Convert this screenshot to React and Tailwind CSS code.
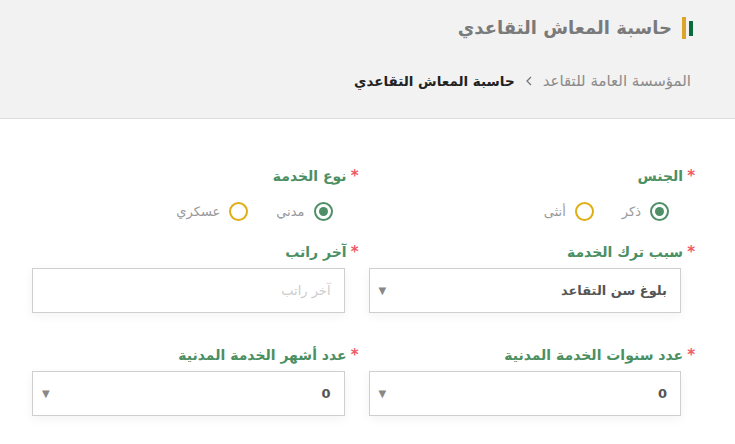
import React from 'react';

const font = { fontFamily: '"DejaVu Sans", "Noto Sans", sans-serif' };

const Label = ({ children }) => (
    <div className="flex items-center gap-1 h-5 text-[14px] font-bold text-[#4b8f62]">
        <span className="text-[#ef5a63] text-[15px]">*</span>
        <span>{children}</span>
    </div>
);

const Radio = ({ checked, label }) => (
    <div className="flex items-center gap-[9px]">
        {checked ? (
            <span className="w-[19px] h-[19px] rounded-full border-2 border-[#4f8f66] flex items-center justify-center">
                <span className="w-[9px] h-[9px] rounded-full bg-[#4f8f66]"></span>
            </span>
        ) : (
            <span className="w-[19px] h-[19px] rounded-full border-2 border-[#dfae16]"></span>
        )}
        <span className="text-[13px] text-[#9a9a9a]">{label}</span>
    </div>
);

const Select = ({ value }) => (
    <div className="mr-[14px] h-[45px] border border-[#cfcfcf] bg-white shadow-[0_3px_10px_rgba(0,0,0,0.05)] flex items-center justify-between pr-[13px] pl-[9px]">
        <span className="text-[13px] font-bold text-[#555]">{value}</span>
        <span className="text-[10px] text-[#888]">▼</span>
    </div>
);

const Input = ({ placeholder }) => (
    <div className="mr-[14px] h-[45px] border border-[#cfcfcf] bg-white shadow-[0_3px_10px_rgba(0,0,0,0.05)] flex items-center px-[13px]">
        <span className="text-[13px] text-[#cccccc]">{placeholder}</span>
    </div>
);

export default function App() {
    return (
        <div dir="rtl" className="w-[735px] h-[444px] bg-white overflow-hidden" style={font}>
            {/* Header */}
            <header className="h-[119px] bg-[#f2f2f2] border-b border-[#dcdcdc] pr-[42px] pt-[17px]">
                <div className="flex items-center gap-[10px]">
                    <div className="flex items-center gap-[3px] h-[22px]">
                        <span className="w-[4px] h-[15px] bg-[#0c6b3a]"></span>
                        <span className="w-[4px] h-[22px] bg-[#dca52a]"></span>
                    </div>
                    <h1 className="text-[18px] font-bold text-[#7a7a7a] leading-none">حاسبة المعاش التقاعدي</h1>
                </div>
                <div className="flex items-center gap-2 mt-[31px] pr-[2px]">
                    <span className="text-[15px] text-[#8a8a8a]">المؤسسة العامة للتقاعد</span>
                    <svg width="8" height="10" viewBox="0 0 8 10" className="mx-[2px]">
                        <path d="M6 1 L2 5 L6 9" fill="none" stroke="#777" strokeWidth="1.3" />
                    </svg>
                    <span className="text-[13.5px] font-bold text-[#222]">حاسبة المعاش التقاعدي</span>
                </div>
            </header>

            {/* Form */}
            <main className="pr-[40px] pl-[32px] pt-[47px]">
                <div className="grid grid-cols-2 gap-x-[10px]">
                    <div>
                        <Label>الجنس</Label>
                        <div className="flex items-center gap-[28px] mr-[26px] mt-[16px] h-[19px]">
                            <Radio checked label="ذكر" />
                            <Radio label="أنثى" />
                        </div>
                    </div>
                    <div>
                        <Label>نوع الخدمة</Label>
                        <div className="flex items-center gap-[28px] mr-[26px] mt-[16px] h-[19px]">
                            <Radio checked label="مدني" />
                            <Radio label="عسكري" />
                        </div>
                    </div>

                    <div className="mt-[21px]">
                        <Label>سبب ترك الخدمة</Label>
                        <div className="mt-[6px]">
                            <Select value="بلوغ سن التقاعد" />
                        </div>
                    </div>
                    <div className="mt-[21px]">
                        <Label>آخر راتب</Label>
                        <div className="mt-[6px]">
                            <Input placeholder="آخر راتب" />
                        </div>
                    </div>

                    <div className="mt-[32px]">
                        <Label>عدد سنوات الخدمة المدنية</Label>
                        <div className="mt-[6px]">
                            <Select value="0" />
                        </div>
                    </div>
                    <div className="mt-[32px]">
                        <Label>عدد أشهر الخدمة المدنية</Label>
                        <div className="mt-[6px]">
                            <Select value="0" />
                        </div>
                    </div>
                </div>
            </main>
        </div>
    );
}
